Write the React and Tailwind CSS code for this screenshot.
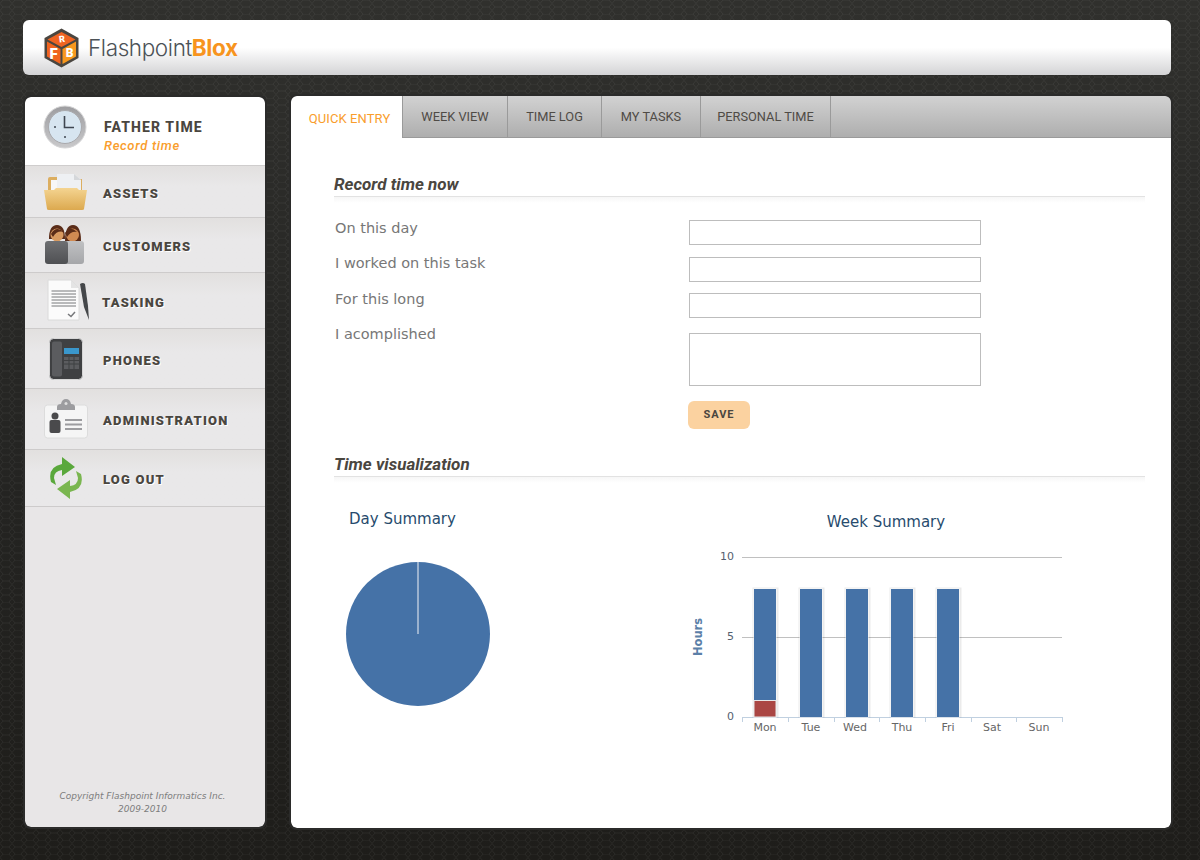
import React from 'react';

const din = "font-['Roboto','Liberation_Sans',sans-serif]";
const verdana = "font-['DejaVu_Sans','Liberation_Sans',sans-serif]";

function HexBackground() {
  return (
    <svg className="absolute inset-0 w-full h-full" aria-hidden="true">
      <defs>
        <pattern id="hex" width="12" height="14" patternUnits="userSpaceOnUse">
          <path d="M3 0 L9 0 L12 3.5 L9 7 L3 7 L0 3.5 Z M3 7 L0 10.5 L3 14 M9 7 L12 10.5 L9 14" fill="none" stroke="#fff" strokeOpacity="0.05" strokeWidth="1" />
        </pattern>
      </defs>
      <rect width="100%" height="100%" fill="url(#hex)" />
    </svg>
  );
}

function Logo() {
  return (
    <svg width="37" height="40" viewBox="0 0 37 40">
      <path d="M18.5 0.5 L35.5 10 L35.5 30 L18.5 39.5 L1.5 30 L1.5 10 Z" fill="#4a4640" />
      <path d="M18.5 4 L32.5 11.5 L18.5 19 L4.5 11.5 Z" fill="#ef6422" />
      <path d="M4 13.5 L17.5 21 L17.5 36 L4 28.5 Z" fill="#f0641f" />
      <path d="M19.5 21 L33 13.5 L33 28.5 L19.5 36 Z" fill="#f8981d" />
      <text x="19" y="14" textAnchor="middle" fontSize="9" fontWeight="900" fill="#fff" fontFamily="Roboto" transform="rotate(-8 19 11)">R</text>
      <text x="10.5" y="31" textAnchor="middle" fontSize="15" fontWeight="900" fill="#fff" fontFamily="Roboto">F</text>
      <text x="26.5" y="29" textAnchor="middle" fontSize="12" fontWeight="900" fill="#fff" fontFamily="Roboto">B</text>
    </svg>
  );
}

function ClockIcon() {
  return (
    <svg width="44" height="44" viewBox="0 0 44 44">
      <defs>
        <linearGradient id="ring" x1="0" y1="0" x2="0" y2="1">
          <stop offset="0" stopColor="#9d9da0" />
          <stop offset="1" stopColor="#c9c9cb" />
        </linearGradient>
      </defs>
      <circle cx="22" cy="22" r="21" fill="url(#ring)" stroke="#d5d5d6" strokeWidth="1" />
      <circle cx="22" cy="22" r="16.5" fill="#d7e5f0" stroke="#a9a9ac" strokeWidth="1" />
      <path d="M21.5 11 V22.5 H31" fill="none" stroke="#3f4650" strokeWidth="1.6" />
      <circle cx="12" cy="22" r="1" fill="#3f4650" />
      <circle cx="22" cy="32" r="1" fill="#3f4650" />
    </svg>
  );
}

function FolderIcon() {
  return (
    <svg width="44" height="38" viewBox="0 0 44 38">
      <defs>
        <linearGradient id="folder" x1="0" y1="0" x2="0" y2="1">
          <stop offset="0" stopColor="#f4d491" />
          <stop offset="1" stopColor="#dca94f" />
        </linearGradient>
      </defs>
      <path d="M4 6 Q4 4 6 4 H14 L16 6 H38 V20 H4 Z" fill="#dcae60" />
      <path d="M7 7 H22 V20 H7 Z" fill="#f7f7f8" />
      <path d="M13 1 H30 L37 7 V22 H13 Z" fill="#eef0f3" />
      <path d="M30 1 V7 H37 Z" fill="#d5d7da" />
      <path d="M0 17 H10 L12 15 H33 L35 17 H43 L40 36 Q40 37 38 37 H5 Q3 37 3 36 Z" fill="url(#folder)" />
    </svg>
  );
}

function PeopleIcon() {
  return (
    <svg width="40" height="40" viewBox="0 0 40 40">
      <defs>
        <linearGradient id="bodyDark" x1="0" y1="0" x2="0" y2="1">
          <stop offset="0" stopColor="#6e6f72" />
          <stop offset="1" stopColor="#4f5053" />
        </linearGradient>
        <linearGradient id="bodyLight" x1="0" y1="0" x2="0" y2="1">
          <stop offset="0" stopColor="#c0c1c3" />
          <stop offset="1" stopColor="#a5a6a9" />
        </linearGradient>
      </defs>
      <path d="M20 16 Q20 0 28 0 Q36 0 36 16 Z" fill="#5a2c18" />
      <circle cx="27.5" cy="10" r="6.5" fill="#d08a52" />
      <path d="M20 8 Q25 0 32 7 Q26 6 22 12 Z" fill="#5a2c18" />
      <rect x="19" y="16" width="20" height="23" rx="3" fill="url(#bodyLight)" />
      <path d="M4 14 Q4 0 12 0 Q20 0 20 14 Z" fill="#5a2c18" />
      <circle cx="12" cy="10" r="6.5" fill="#d89a60" />
      <path d="M6 9 Q11 0 19 7 Q12 5 8 12 Z" fill="#5a2c18" />
      <rect x="0" y="16" width="23" height="23" rx="3" fill="url(#bodyDark)" />
    </svg>
  );
}

function DocIcon() {
  return (
    <svg width="44" height="44" viewBox="0 0 44 44">
      <path d="M1 1 H24 L32 9 V41 H1 Z" fill="#fbfbfb" stroke="#dadada" />
      <path d="M24 1 V9 H32 Z" fill="#e4e4e4" />
      <path d="M4.5 12 H29 M4.5 15 H29 M4.5 18 H29 M4.5 21 H29 M4.5 24 H29 M4.5 27 H29" stroke="#77787b" strokeWidth="1" />
      <path d="M21 35 L24 37.5 L28 33" fill="none" stroke="#77787b" strokeWidth="1.5" />
      <path d="M33 5 Q36 3 38 5 L41 27 L42 41 L37 28 Z" fill="#45474a" />
    </svg>
  );
}

function PhoneIcon() {
  return (
    <svg width="34" height="42" viewBox="0 0 34 42">
      <rect x="0.5" y="0.5" width="33" height="41" rx="4" fill="#3f4042" stroke="#d6d6d6" />
      <rect x="3" y="3.5" width="10" height="35" rx="2" fill="#5b5c5f" />
      <rect x="15" y="10" width="15" height="6" fill="#3a97cc" />
      <path d="M15 19 H30 V31 H15 Z" fill="#5b5c5f" />
      <path d="M15 22.5 H30 M15 26 H30 M20 19 V31 M25 19 V31" stroke="#3f4042" />
    </svg>
  );
}

function BadgeIcon() {
  return (
    <svg width="44" height="40" viewBox="0 0 44 40">
      <rect x="0.5" y="6" width="43" height="33" rx="3" fill="#f5f5f5" stroke="#dcdcdc" />
      <path d="M13 8 Q13 5 17 5 Q18 0 22 0 Q26 0 27 5 Q31 5 31 8 V11 H13 Z" fill="#9c9c9f" />
      <circle cx="22" cy="4.5" r="1.5" fill="#ddd" />
      <circle cx="11" cy="17" r="3.5" fill="#4a4a4c" />
      <rect x="5.5" y="21" width="11" height="13" rx="2" fill="#4a4a4c" />
      <path d="M21 21 H38 M21 25.5 H38 M21 30 H38" stroke="#9c9c9f" strokeWidth="2" />
    </svg>
  );
}

function SyncIcon() {
  return (
    <svg width="36" height="46" viewBox="0 0 36 46">
      <path d="M3 27 Q-1 12 14 9 V2 L27 12 L14 21 V15 Q6 16 6 23 L8 30 Z" fill="#5aa83c" />
      <path d="M33 19 Q37 34 22 37 V44 L9 34 L22 25 V31 Q30 30 30 23 L28 16 Z" fill="#7ab650" />
    </svg>
  );
}

const navItems = [
  { label: 'ASSETS', h: 'h-[52px]', icon: <FolderIcon />, iconCls: 'w-[44px] ml-[19px]', gap: 'ml-[15px]' },
  { label: 'CUSTOMERS', h: 'h-[55px]', icon: <PeopleIcon />, iconCls: 'w-[40px] ml-[20px]', gap: 'ml-[18px]' },
  { label: 'TASKING', h: 'h-[56px]', icon: <DocIcon />, iconCls: 'w-[44px] ml-[22px]', gap: 'ml-[11px]' },
  { label: 'PHONES', h: 'h-[60px]', icon: <PhoneIcon />, iconCls: 'w-[34px] ml-[24px]', gap: 'ml-[20px]' },
  { label: 'ADMINISTRATION', h: 'h-[61px]', icon: <BadgeIcon />, iconCls: 'w-[44px] ml-[19px]', gap: 'ml-[15px]' },
  { label: 'LOG OUT', h: 'h-[57px]', icon: <SyncIcon />, iconCls: 'w-[36px] ml-[23px]', gap: 'ml-[19px]' },
];

function Sidebar() {
  return (
    <aside className="w-[240px] h-[730px] flex flex-col bg-[#e8e6e7] rounded-md overflow-hidden mt-px outline-2 outline-[#2b2b2a]">
      <div className="h-[69px] bg-white border-b border-[#cfcdcd] flex items-center shrink-0">
        <div className="ml-[18px] -mt-[8px]"><ClockIcon /></div>
        <div className={`ml-[17px] mt-[11px] ${din}`}>
          <div className="text-[14px] leading-[18px] font-extrabold tracking-[1.1px] text-[#4a463f]">FATHER TIME</div>
          <div className="text-[13px] leading-[19px] italic font-medium text-[#f99d2c] tracking-[0.7px]">Record time</div>
        </div>
      </div>
      {navItems.map(item => (
        <div key={item.label} className={`${item.h} shrink-0 flex items-center border-b border-[#cdcbcb] bg-gradient-to-b from-[#e2e0df] to-[#e9e8e9] to-40%`}>
          <div className={`${item.iconCls} shrink-0 flex justify-center`}>{item.icon}</div>
          <div className={`${item.gap} pt-[4px] ${din} text-[13px] font-black tracking-[1.2px] text-[#4a463f] [text-shadow:1px_1px_0_#fff]`}>{item.label}</div>
        </div>
      ))}
      <div className={`mt-auto mb-[11px] pr-[5px] text-center text-[9px] leading-[13px] italic text-[#7d7d7d] ${verdana}`}>
        Copyright Flashpoint Informatics Inc.<br />2009-2010
      </div>
    </aside>
  );
}

const tabs = [
  { label: 'WEEK VIEW', w: 'w-[105px]' },
  { label: 'TIME LOG', w: 'w-[94px]' },
  { label: 'MY TASKS', w: 'w-[99px]' },
  { label: 'PERSONAL TIME', w: 'w-[130px]' },
];

function Tabs() {
  return (
    <div className="h-[42px] flex bg-gradient-to-b from-[#d2d2d2] to-[#adadad]">
      <div className={`w-[112px] h-[42px] bg-white border-r border-[#9a9a9a] flex items-center justify-center pt-[3px] pl-[6px] text-[13px] tracking-[0.1px] text-[#f99d2c] ${din}`}>QUICK ENTRY</div>
      {tabs.map(t => (
        <div key={t.label} className={`${t.w} h-[42px] border-r border-b border-[#9a9a9a] flex items-center justify-center pt-[1px] text-[12.8px] text-[#4f4b46] ${din}`}>{t.label}</div>
      ))}
      <div className="flex-1 border-b border-[#9a9a9a]" />
    </div>
  );
}

function SectionHeading({ children }) {
  return (
    <div className="ml-[43px] mr-[26px]">
      <div className={`h-[20px] pt-[1px] leading-[20px] text-[17px] font-bold italic text-[#4a463f] ${din}`}>{children}</div>
      <div className="mt-[3px] h-[7px] border-t border-[#e2e2e2] bg-gradient-to-b from-[#f6f6f6] to-white" />
    </div>
  );
}

function Field({ label, className, labelCls, area }) {
  return (
    <div className={`flex ${className}`}>
      <label className={`w-[355px] pl-[1px] text-[14.5px] leading-[16px] text-[#777] ${labelCls} ${verdana}`}>{label}</label>
      {area
        ? <textarea className="w-[292px] h-[53px] border border-[#bdbdbd] bg-white resize-none" />
        : <input className="w-[292px] h-[25px] border border-[#bdbdbd] bg-white" />}
    </div>
  );
}

function PieChart() {
  return (
    <svg width="146" height="146" viewBox="0 0 146 146" className="mt-[31px] ml-[54px]">
      <circle cx="73" cy="73" r="72" fill="#4572a7" />
      <path d="M73 1 V73" stroke="#d5deea" strokeWidth="1.2" />
    </svg>
  );
}

const days = ['Mon', 'Tue', 'Wed', 'Thu', 'Fri', 'Sat', 'Sun'];
const barX = [754, 800, 846, 891, 937];

function BarChart() {
  return (
    <svg width="400" height="190" viewBox="680 545 400 190" className="mt-[12px]" fontFamily="DejaVu Sans">
      <path d="M742 557.5 H1062 M742 637.5 H1062" stroke="#c0c0c0" />
      <path d="M742 717.5 H1062" stroke="#c0d0e0" />
      {[742, 788, 834, 879, 925, 971, 1016, 1062].map(x => (
        <path key={x} d={`M${x}.5 717 V722`} stroke="#c0d0e0" />
      ))}
      {barX.map(x => (
        <g key={x}>
          <rect x={x - 1.5} y={587.5} width={26} height={130} fill="#000" fillOpacity="0.08" />
          <rect x={x - 0.5} y={588.5} width={23} height={129} fill="#fff" fillOpacity="0.9" />
          <rect x={x} y={589} width={22} height={128} fill="#4572a7" />
        </g>
      ))}
      <rect x="754" y="700.5" width="22" height="16.5" fill="#aa4643" stroke="#e6e6e6" />
      {[['10', 557], ['5', 637], ['0', 717]].map(([t, y]) => (
        <text key={t} x="734" y={y + 3} textAnchor="end" fontSize="11" fill="#555f70">{t}</text>
      ))}
      {days.map((d, i) => (
        <text key={d} x={[765, 811, 855, 902, 948, 992, 1039][i]} y="731" textAnchor="middle" fontSize="11" fill="#666">{d}</text>
      ))}
      <text transform="translate(702 637) rotate(-90)" textAnchor="middle" fontSize="11.5" fontWeight="bold" fill="#5b80a8">Hours</text>
    </svg>
  );
}

function Main() {
  return (
    <main className="w-[880px] h-[732px] bg-white rounded-md overflow-hidden outline-2 outline-[#2b2b2a]">
      <Tabs />
      <div className="pt-[35px]">
        <SectionHeading>Record time now</SectionHeading>
      </div>
      <form className="ml-[43px] mt-[17px]">
        <Field label="On this day" />
        <Field label="I worked on this task" className="mt-[12px]" labelCls="-mt-[2px]" />
        <Field label="For this long" className="mt-[11px]" labelCls="-mt-[2px]" />
        <Field label="I acomplished" className="mt-[15px]" labelCls="-mt-[7px]" area />
        <div className="ml-[355px] mt-[15px]">
          <div className={`-ml-px w-[62px] h-[28px] pt-[1px] rounded-md bg-[#fbd2a0] flex items-center justify-center text-[11px] font-bold tracking-[1px] text-[#4a463f] ${din}`}>SAVE</div>
        </div>
      </form>
      <div className="mt-[24px]">
        <SectionHeading>Time visualization</SectionHeading>
      </div>
      <div className="flex mt-[25px]">
        <div className="w-[389px]">
          <div className={`ml-[58px] text-[15px] leading-[22px] text-[#274b6d] ${verdana}`}>Day Summary</div>
          <PieChart />
        </div>
        <div className="w-[400px]">
          <div className={`text-center ml-[12px] pt-[3px] text-[15px] leading-[22px] text-[#274b6d] ${verdana}`}>Week Summary</div>
          <BarChart />
        </div>
      </div>
    </main>
  );
}

export default function App() {
  return (
    <div className="relative w-[1200px] h-[860px] overflow-hidden bg-gradient-to-b from-[#30302d] via-[#252523] to-[#1e1d1a]">
      <HexBackground />
      <div className="relative pt-[20px] pl-[23px]">
        <header className="w-[1148px] h-[55px] rounded-md bg-gradient-to-b from-white from-50% to-[#d4d4d6] flex items-center pl-[20px]">
          <Logo />
          <div className="ml-[8px] text-[22.5px] tracking-[-0.4px] font-['Inter','Liberation_Sans',sans-serif] font-light text-[#4c5257]">
            Flashpoint<span className="font-bold text-[#f7941e]">Blox</span>
          </div>
        </header>
        <div className="flex gap-[26px] mt-[21px] ml-[2px]">
          <Sidebar />
          <Main />
        </div>
      </div>
    </div>
  );
}
